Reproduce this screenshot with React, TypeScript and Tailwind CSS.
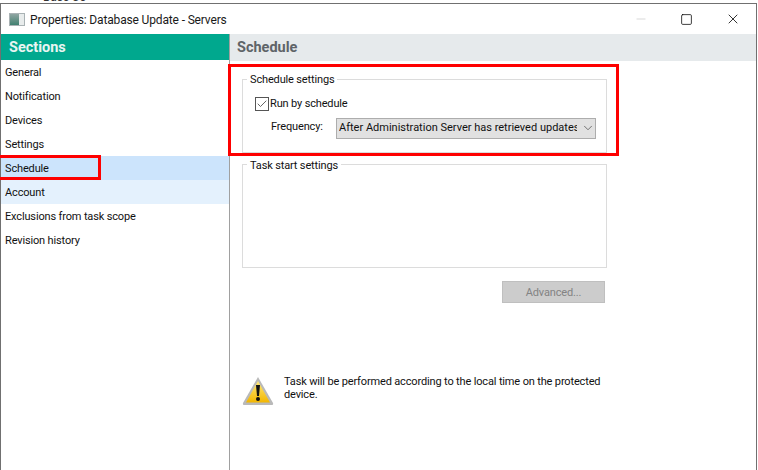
import { ChevronDown, Check, Minus, Square, X } from "lucide-react";

const sections = [
  "General",
  "Notification",
  "Devices",
  "Settings",
  "Schedule",
  "Account",
  "Exclusions from task scope",
  "Revision history",
];

const App = () => {
  return (
    <div className="relative h-[470px] w-[758px] overflow-hidden bg-white font-['Roboto',sans-serif] text-[11px] tracking-[-0.15px] text-[#111]">
      <div className="h-[3px] overflow-hidden pl-[43px] text-[12px] leading-[3px] text-[#333]">
        <span className="relative top-[-4px]">Base Co</span>
      </div>
      <div className="flex h-[467px] w-[757px] flex-col border-l border-r border-t border-[#707070] bg-white">
        {/* title bar */}
        <div className="flex h-[30px] items-center">
          <div className="ml-[8px] flex h-[13px] w-[16px] border border-[#a9b2b4] bg-[#e8ecec]">
            <div className="h-full w-[9px] bg-gradient-to-b from-[#8fa5a2] to-[#3f8070]" />
          </div>
          <span className="ml-[5px] pt-[1px] text-[12px] tracking-[-0.15px] text-[#1a1a1a]">Properties: Database Update - Servers</span>
          <div className="ml-auto flex items-center">
            <Minus size={14} strokeWidth={1} className="mr-[32px] text-[#bdbdbd]" />
            <Square size={13} strokeWidth={1.4} className="mr-[32px] text-black" />
            <X size={16} strokeWidth={1.2} className="mr-[15px] text-black" />
          </div>
        </div>

        <div className="flex min-h-0 flex-1">
          {/* sections */}
          <div className="w-[229px] shrink-0 border-r border-[#a0a0a0]">
            <div className="flex h-[26px] items-center bg-[#00a88e] pl-[8px] pt-[1px] text-[14.5px] font-bold tracking-normal text-[#e8f5f2]">
              Sections
            </div>
            <ul>
              {sections.map((name) => (
                <li
                  key={name}
                  className={
                    "flex h-[24px] items-center pl-[4px] pt-[2px] " +
                    (name === "Schedule" ? "bg-[#cce4fc]" : name === "Account" ? "bg-[#e4f1fd]" : "")
                  }
                >
                  {name}
                </li>
              ))}
            </ul>
          </div>

          {/* schedule panel */}
          <div className="min-w-0 flex-1">
            <div className="flex h-[27px] items-center bg-[#e6eaec] pl-[7px] pt-[1px] text-[14.5px] font-bold tracking-normal text-[#5e6468]">
              Schedule
            </div>
            <div className="pl-[12px] pt-[18px]">
              <div className="relative h-[74px] w-[365px] border border-[#dcdcdc]">
                <span className="absolute left-[4px] top-[-8px] bg-white px-[3px] leading-[16px]">Schedule settings</span>
                <div className="flex items-center pl-[12px] pt-[16px]">
                  <span className="flex h-[14px] w-[14px] items-center justify-center border border-[#555]">
                    <Check size={12} strokeWidth={1.8} className="text-[#555]" />
                  </span>
                  <span className="ml-[1px]">Run by schedule</span>
                </div>
                <div className="flex items-center pl-[28px] pt-[5px]">
                  <span className="w-[65px] pb-[1px]">Frequency:</span>
                  <div className="flex h-[21px] w-[260px] items-center border border-[#adadad] bg-[#e1e1e1] pl-[2px]">
                    <span className="w-[238px] overflow-hidden whitespace-nowrap tracking-normal">After Administration Server has retrieved updates</span>
                    <ChevronDown size={14} strokeWidth={1.2} className="ml-[4px] text-[#444]" />
                  </div>
                </div>
              </div>
              <div className="relative mt-[11px] h-[104px] w-[365px] border border-[#dcdcdc]">
                <span className="absolute left-[4px] top-[-7px] bg-white px-[3px] leading-[16px]">Task start settings</span>
              </div>
              <div className="mt-[13px] flex w-[363px] justify-end">
                <div className="flex h-[22px] w-[103px] items-center justify-center border border-[#bfbfbf] bg-[#cccccc] pt-[2px] text-[#838383]">
                  Advanced...
                </div>
              </div>
              <div className="mt-[71px] flex">
                <svg width="32" height="30" viewBox="0 0 32 30" className="mt-[2px] shrink-0">
                  <defs>
                    <linearGradient id="warn" x1="0" y1="0" x2="0" y2="1">
                      <stop offset="0" stopColor="#ffe97a" />
                      <stop offset="1" stopColor="#f2b600" />
                    </linearGradient>
                  </defs>
                  <path d="M16 1 L31 27 Q31.5 29 30 29 L2 29 Q0.5 29 1 27 Z" fill="#b9b9b9" />
                  <path d="M16 5 L28 26.5 L4 26.5 Z" fill="url(#warn)" />
                  <path d="M14 9 L18 9 L17 20 L15 20 Z" fill="#111" />
                  <circle cx="16" cy="23" r="2" fill="#111" />
                </svg>
                <p className="ml-[10px] w-[330px] pt-[1px] leading-[13px]">
                  Task will be performed according to the local time on the protected device.
                </p>
              </div>
            </div>
          </div>
        </div>
      </div>

      {/* red annotation boxes */}
      <div className="absolute left-[228px] top-[64px] h-[92px] w-[391px] border-[3px] border-[#fe0000]" />
      <div className="absolute left-[-3px] top-[155px] h-[25px] w-[104px] border-[3px] border-[#fe0000]" />
    </div>
  );
};

export default App;
